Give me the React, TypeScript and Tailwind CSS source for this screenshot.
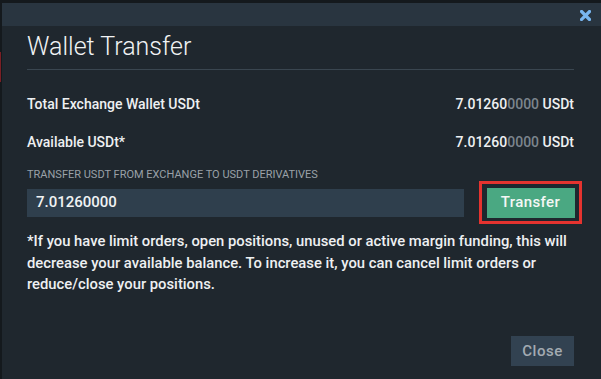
import React from "react";

export default function App() {
  return (
    <div
      className="relative w-[601px] h-[379px] overflow-hidden bg-[#14191d] pt-[3px] pl-[2px]"
      style={{ fontFamily: "Roboto, 'Liberation Sans', sans-serif" }}
    >
      <div className="absolute left-0 top-[52px] h-[30px] w-[1px] bg-[#7a1f25]" />
      <div className="flex h-full flex-col bg-[#1f272e]">
        <div className="flex h-[23px] items-center justify-end bg-[#293540] pr-[10px]">
          <svg width="11" height="11" viewBox="0 0 11 11" className="mt-[1px]">
            <path d="M1.5 1.5 L9.5 9.5 M9.5 1.5 L1.5 9.5" stroke="#78b6f0" strokeWidth="3.2" strokeLinecap="square" />
          </svg>
        </div>
        <div className="flex flex-1 flex-col pl-[25px] pr-[27px]">
          <h1 className="mt-[7px] text-[25px] leading-[28px] font-light text-[#f1f3f4]">Wallet Transfer</h1>
          <div className="mt-[8px] h-px bg-[#3a4650]" />
          <div className="mt-[24px] flex justify-between text-[14px] leading-[20px] font-medium text-[#eef0f2]">
            <span>Total Exchange Wallet USDt</span>
            <span>
              7.01260<span className="text-[#7c858d]">0000</span> USDt
            </span>
          </div>
          <div className="mt-[18px] flex justify-between text-[14px] leading-[20px] font-medium text-[#eef0f2]">
            <span>Available USDt*</span>
            <span>
              7.01260<span className="text-[#7c858d]">0000</span> USDt
            </span>
          </div>
          <div className="mt-[17px] text-[11px] leading-[12px] uppercase text-[#9aa1a8]">
            Transfer USDT from Exchange to USDT Derivatives
          </div>
          <div className="flex items-center justify-between">
            <div className="flex h-[28px] w-[437px] items-center bg-[#2f3f4d] pl-[9px] text-[15px] font-medium text-[#f1f3f4]">
              7.01260000
            </div>
            <div className="mr-[-8px] flex h-[43px] w-[103px] items-center justify-center border-[3px] border-[#e5332f]">
              <button className="h-[30px] w-[88px] bg-[#4aa882] text-[15px] font-medium tracking-[0.4px] text-[#f4f7f5]">
                Transfer
              </button>
            </div>
          </div>
          <p className="mt-[7px] text-[14.8px] leading-[21.5px] font-medium text-[#eef0f2]">
            *If you have limit orders, open positions, unused or active margin funding, this will decrease your
            available balance. To increase it, you can cancel limit orders or reduce/close your positions.
          </p>
          <div className="mt-auto flex justify-end pb-[13px]">
            <button className="h-[30px] w-[63px] bg-[#324251] text-[15px] font-medium tracking-[0.5px] text-[#a3abb2]">
              Close
            </button>
          </div>
        </div>
      </div>
    </div>
  );
}
